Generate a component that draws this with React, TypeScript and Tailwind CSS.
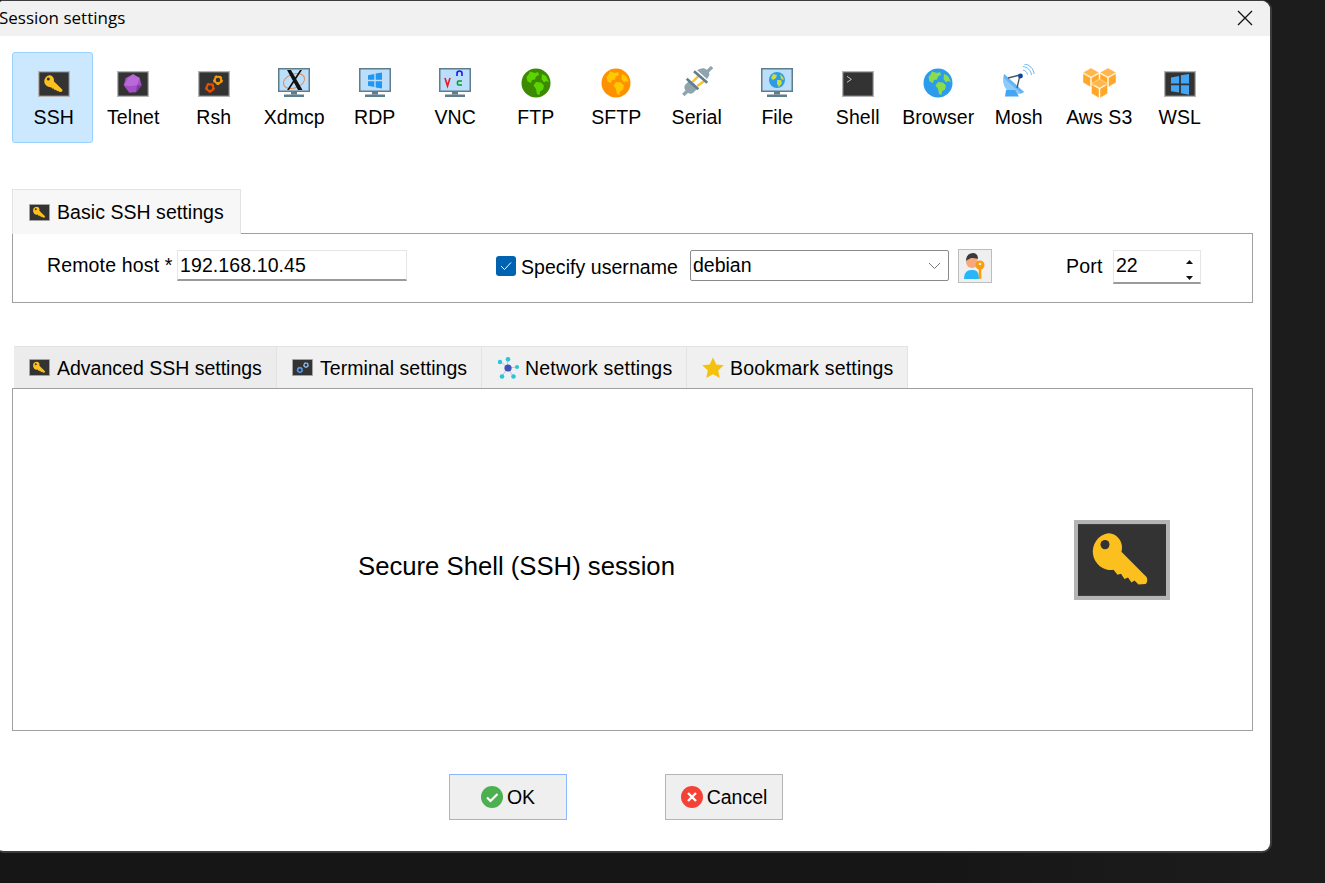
import type { ReactNode } from "react";

function Tile({ w = 32, h = 26, children }: { w?: number; h?: number; children?: ReactNode }) {
  return (
    <svg width={w} height={h} viewBox="0 0 96 78" preserveAspectRatio="none" className="shrink-0">
      <rect width="96" height="78" fill="#b4b4b4" />
      <rect x="4" y="4" width="88" height="70" fill="#333333" />
      {children}
    </svg>
  );
}

const keyShape = (
  <g fill="#fcc01e">
    <path d="M34 13a14 14 0 0 1 14 14c0 1.500-.2 2.800-.6 4L72 55c2 2 1.500 6-.5 7.500l-7 .5-4-4-3 2-3.500-5-3.500 1.500-3.500-5-3.500 1-4-5A14 14 0 1 1 34 13z" />
    <circle cx="31" cy="24" r="4.500" fill="#333333" />
  </g>
);

function KeyTile({ w = 32, h = 26 }: { w?: number; h?: number }) {
  return <Tile w={w} h={h}>{keyShape}</Tile>;
}

function Gear({ x, y, r, color }: { x: number; y: number; r: number; color: string }) {
  return (
    <g>
      <circle cx={x} cy={y} r={r} fill="none" stroke={color} strokeWidth={r * 0.62} />
      <circle cx={x} cy={y} r={r * 1.28} fill="none" stroke={color} strokeWidth={r * 0.42} strokeDasharray={`${r * 0.8} ${r * 0.8}`} />
    </g>
  );
}

function GemTile() {
  return (
    <Tile>
      <path d="M48 10l20 11 6 22-17 21-20 1-17-22 6-22z" fill="#a44fc6" />
      <path d="M48 10l20 11-8 22-22 3-16-3 11-22z" fill="#b96ad8" />
      <path d="M60 43l14 0-17 21z" fill="#7f3a9e" />
    </Tile>
  );
}

function Monitor({ children }: { children?: ReactNode }) {
  return (
    <svg width="32" height="29" viewBox="0 0 32 29" className="shrink-0">
      <rect x="0.750" y="0.750" width="30.500" height="22.500" fill="#bbdefb" stroke="#607d8b" strokeWidth="1.500" />
      <rect x="13" y="24" width="6" height="2.500" fill="#607d8b" />
      <rect x="6" y="26.500" width="20" height="2.500" fill="#607d8b" />
      {children}
    </svg>
  );
}

function Globe({ ocean, land, size = 30 }: { ocean: string; land: string; size?: number }) {
  return (
    <svg width={size} height={size} viewBox="0 0 30 30" className="-mb-[1px] shrink-0">
      <circle cx="15" cy="15" r="14.500" fill={ocean} />
      <path d="M9 3.500l5 1.500 3-1 1 3-3 1.500-1 3-3 .5-1 3-3.500-1.500-1-4.500 2-2.500zM15 14l5 .5 3 3-1 4-3 2-.5 3.500-2.500-1-1-5-2.500-3.500zM21 6l4 2 3 6-3-1-2 1.500-2.500-3.500z" fill={land} />
    </svg>
  );
}

function Plug() {
  return (
    <svg width="32" height="31" viewBox="0 0 32 31" className="shrink-0">
      <path d="M11.300 16l6-5.700M16.300 20l7-5" stroke="#fbc02d" strokeWidth="2.400" />
      <path d="M8 15l8 8-4 4c-2 1-4 1-6-1l-1-1c-2-2-2-4-1-6z" fill="#90a4ae" />
      <path d="M2.300 29l4-4" stroke="#90a4ae" strokeWidth="3.400" />
      <path d="M5.700 12.700L17.300 23.300" stroke="#607d8b" strokeWidth="2.600" />
      <path d="M16 4l10 9 2-3c1-2 0-4-1-5l-1-1c-2-2-5-2-7-1z" fill="#90a4ae" />
      <path d="M13 5.300l13.300 11.400" stroke="#607d8b" strokeWidth="2.600" />
      <path d="M25 7l6-6" stroke="#90a4ae" strokeWidth="3.200" />
    </svg>
  );
}

function Dish() {
  return (
    <svg width="32" height="33" viewBox="0 0 32 33" className="shrink-0">
      <path d="M1 10l20 18c-6 4-13 2-17-2S-1 16 1 10z" fill="#90caf9" />
      <path d="M1 10l20 18-3 1.500L1 14z" fill="#64b5f6" />
      <path d="M3 26h9l4 6.500H2z" fill="#42a5f5" />
      <path d="M5 14l12-3M17 11l-3 13" stroke="#455a64" strokeWidth="1.300" fill="none" />
      <circle cx="17.500" cy="12" r="2.400" fill="#0d47a1" />
      <path d="M20 6c2.500.5 4 2 4.500 4.500M20 2.500c4.500.5 8 4 8.500 8.500M21 0c5 0 10 5 10 10" stroke="#64b5f6" strokeWidth="1" fill="none" />
    </svg>
  );
}

function Cube({ x, y }: { x: number; y: number }) {
  return (
    <g transform={`translate(${x} ${y})`} stroke="#fff3e0" strokeWidth="0.500">
      <path d="M8 0l8 4.500-8 4.500-8-4.500z" fill="#ffb74d" />
      <path d="M0 5.500l7.500 4.200v9.300L0 14.500z" fill="#ffa726" />
      <path d="M16 5.500L8.500 9.700v9.300l7.500-4.500z" fill="#ffa726" />
    </g>
  );
}

function Cubes() {
  return (
    <svg width="33" height="30" viewBox="0 0 33 30" className="-mb-[1px] shrink-0">
      <Cube x={0} y={0} />
      <Cube x={17} y={0} />
      <Cube x={8.500} y={11} />
    </svg>
  );
}

function WindowsGlyph({ x, y, size, color }: { x: number; y: number; size: number; color: string }) {
  const g = size * 0.05;
  const h = size / 2;
  return (
    <path
      d={`M${x} ${y + size * 0.12}L${x + h - g} ${y + size * 0.04}V${y + h - g}H${x}ZM${x + h + g} ${y}L${x + size} ${y - size * 0.08}V${y + h - g}H${x + h + g}ZM${x} ${y + h + g}H${x + h - g}V${y + size * 0.96}L${x} ${y + size * 0.88}ZM${x + h + g} ${y + h + g}H${x + size}V${y + size * 1.08}L${x + h + g} ${y + size}Z`}
      fill={color}
    />
  );
}

const sessions: { label: string; icon: ReactNode }[] = [
  { label: "SSH", icon: <KeyTile /> },
  { label: "Telnet", icon: <GemTile /> },
  {
    label: "Rsh",
    icon: (
      <Tile>
        <Gear x={36} y={50} r={10} color="#e65100" />
        <Gear x={60} y={27} r={10} color="#f59a0c" />
      </Tile>
    ),
  },
  {
    label: "Xdmcp",
    icon: (
      <Monitor>
        <ellipse cx="16" cy="13" rx="11" ry="7" fill="none" stroke="#ef8a4a" strokeWidth="1" transform="rotate(-20 16 13)" />
        <path d="M9 2l11 20h4.500L13 2zM22 2L9 22h2L24 2z" fill="#111" />
      </Monitor>
    ),
  },
  {
    label: "RDP",
    icon: (
      <Monitor>
        <WindowsGlyph x={9} y={5.500} size={14} color="#2196f3" />
      </Monitor>
    ),
  },
  {
    label: "VNC",
    icon: (
      <Monitor>
        <path d="M6 10l2.500 8L11 10" stroke="#f01824" strokeWidth="1.600" fill="none" />
        <path d="M18 8V5.500a2.500 2.500 0 0 1 5 0V8" stroke="#1a1af0" strokeWidth="1.600" fill="none" />
        <path d="M23 13h-3.500a1 1 0 0 0-1 1v2a1 1 0 0 0 1 1H23" stroke="#0a9a20" strokeWidth="1.600" fill="none" />
      </Monitor>
    ),
  },
  { label: "FTP", icon: <Globe ocean="#3c8a00" land="#5cd400" /> },
  { label: "SFTP", icon: <Globe ocean="#ff9100" land="#ffc800" /> },
  { label: "Serial", icon: <Plug /> },
  {
    label: "File",
    icon: (
      <Monitor>
        <circle cx="16" cy="12" r="8" fill="#2e9be6" />
        <path d="M12 6l4 1-1 3-3 2-2-2zM16 12l4 0 1 3-3 4-2-3zM19 6l3 3 1 3-3-1z" fill="#cddc39" />
      </Monitor>
    ),
  },
  {
    label: "Shell",
    icon: (
      <Tile>
        <path d="M15 16l13 9-13 9" stroke="#e0e0e0" strokeWidth="2.500" fill="none" />
      </Tile>
    ),
  },
  { label: "Browser", icon: <Globe ocean="#2b9cec" land="#8bdc4a" /> },
  { label: "Mosh", icon: <Dish /> },
  { label: "Aws S3", icon: <Cubes /> },
  {
    label: "WSL",
    icon: (
      <Tile>
        <WindowsGlyph x={21} y={13} size={54} color="#42a5f5" />
      </Tile>
    ),
  },
];

function Tab({ icon, label, className, textClass = "" }: { icon: ReactNode; label: string; className: string; textClass?: string }) {
  return (
    <div className={`flex items-center border-t border-r border-[#e3e3e3] ${className}`}>
      {icon}
      <span className={`mt-[2px] ${textClass}`}>{label}</span>
    </div>
  );
}

function UserKey() {
  return (
    <svg width="22" height="28" viewBox="0 0 22 28">
      <path d="M0 27c0-6 3-9 7-9h2c4 0 6 3 6 9z" fill="#29b6f6" />
      <circle cx="8" cy="10" r="6" fill="#f5a97f" />
      <path d="M2 9c0-6 4-8 7-8s5 2 5 6c-2-1-5-1-7-1-1 1-3 1-5 3z" fill="#3a3a3a" />
      <circle cx="16" cy="13" r="4.500" fill="#fb9c0b" />
      <circle cx="16" cy="12" r="1.300" fill="#eee" />
      <path d="M14.700 16h2.600v10l-1.300 1.500-1.300-1.500z" fill="#fb9c0b" />
    </svg>
  );
}

export default function App() {
  return (
    <div className="flex h-[883px] w-[1325px] overflow-hidden bg-gradient-to-r from-[#161616] from-70% to-[#1c1c1c] to-95% font-['Liberation_Sans',sans-serif] text-black">
      <div className="-ml-[4px] h-[853px] w-[1276px] shrink-0 overflow-hidden rounded-tl-lg rounded-tr-[10px] rounded-br-[10px] rounded-bl-lg border-t border-r-2 border-b-2 border-[#3c3c3c] bg-white">
        {/* title bar */}
        <div className="flex h-[35px] items-center justify-between bg-[#f1f1f1] pr-[17px] pl-[3px]">
          <span className="-mt-[2px] font-['Open_Sans',sans-serif] text-[17px]">Session settings</span>
          <svg width="16" height="16" viewBox="0 0 16 16" className="-mt-[1px]">
            <path d="M1 1l14 14M15 1L1 15" stroke="#111" strokeWidth="1.300" />
          </svg>
        </div>

        {/* session types */}
        <div className="flex pt-4 pl-[16px]">
          {sessions.map((s, i) => (
            <div
              key={s.label}
              className={`flex h-[91px] w-[80.500px] shrink-0 flex-col items-center rounded-[3px] text-[19.500px] tracking-[0.080px] ${
                i === 0 ? "border border-[#99d1ff] bg-[#cce8ff] pl-[3px]" : "border border-transparent pl-[1px]"
              }`}
            >
              <div className="flex h-[44px] items-end">{s.icon}</div>
              <span className="mt-[7px] whitespace-nowrap leading-[26px]">{s.label}</span>
            </div>
          ))}
        </div>

        {/* basic settings */}
        <div className="relative mt-[46px] pl-[16px]">
          <div className="relative z-10 flex h-[45px] w-[229px] items-center gap-[7px] border-t border-r border-l border-[#e3e3e3] bg-[#f7f7f7] pl-[16px] text-[19.500px] tracking-[0.050px]">
            <KeyTile w={21} h={17} />
            <span className="mt-[1px]">Basic SSH settings</span>
          </div>
          <div className="-mt-[1px] mr-[17px] flex h-[70px] items-start border border-[#a0a0a0] pt-4 text-[19.500px]">
            <span className="mt-[1px] ml-[34px] w-[130px] shrink-0 whitespace-nowrap tracking-[0.150px]">Remote host *</span>
            <div className="h-[31px] w-[230px] shrink-0 border border-b-2 border-[#e6e6e6] border-b-[#9a9a9a] pl-[2px] leading-[28px] tracking-[0.100px]">192.168.10.45</div>
            <div className="mt-[6px] ml-[89px] flex h-5 w-5 shrink-0 items-center justify-center rounded-[3px] bg-[#0063b1]">
              <svg width="12" height="10" viewBox="0 0 12 10">
                <path d="M1 5l3.500 3.500L11 1.500" stroke="#fff" strokeWidth="1" fill="none" />
              </svg>
            </div>
            <span className="mt-[3px] ml-[5px] w-[169px] shrink-0 whitespace-nowrap tracking-[0.050px]">Specify username</span>
            <div className="flex h-[31px] w-[259px] shrink-0 items-center justify-between rounded-[2px] border border-[#8a8a8a] pr-[7px] pl-[2px]">
              <span>debian</span>
              <svg width="13" height="8" viewBox="0 0 13 8">
                <path d="M1 1l5.500 5.500L12 1" stroke="#777" strokeWidth="1" fill="none" />
              </svg>
            </div>
            <div className="-mt-[1px] ml-[9px] flex h-[34px] w-[34px] shrink-0 items-center justify-center border border-[#bdbdbd] bg-[#efefef]">
              <UserKey />
            </div>
            <span className="mt-[2px] ml-[74px] w-[47px] shrink-0 tracking-[0.200px]">Port</span>
            <div className="flex h-[34px] w-[88px] shrink-0 items-start justify-between border border-b-2 border-[#e6e6e6] border-b-[#9a9a9a] pt-[1px] pr-[6px] pl-[2px]">
              <span className="leading-[26px]">22</span>
              <svg width="9" height="26" viewBox="0 0 9 26" className="mt-[5px]">
                <path d="M4.500 3l3.500 4H1zM1 19h7l-3.500 4z" fill="#111" />
              </svg>
            </div>
          </div>
        </div>

        {/* tabs */}
        <div className="mt-[43px] ml-[18px] flex h-[42px] text-[19.500px]">
          <Tab className="w-[263px] gap-[7px] bg-[#ececec] pl-[15px]" icon={<KeyTile w={21} h={17} />} label="Advanced SSH settings" />
          <Tab
            className="w-[205px] gap-[7px] bg-[#f0f0f0] pl-[15px]"
            label="Terminal settings"
            textClass="tracking-[0.050px]"
            icon={
              <Tile w={21} h={17}>
                <Gear x={36} y={50} r={10} color="#5a9be8" />
                <Gear x={64} y={28} r={9} color="#8fb8e8" />
              </Tile>
            }
          />
          <Tab
            className="w-[205px] gap-[6px] bg-[#f0f0f0] pl-[15px]"
            label="Network settings"
            textClass="tracking-[0.200px]"
            icon={
              <svg width="22" height="22" viewBox="0 0 22 22" className="shrink-0">
                <path d="M11 11L3 4M11 11L10 2M11 11l9-1M11 11L4 20M11 11l5 8" stroke="#b8c4e8" strokeWidth="1" />
                <circle cx="11" cy="11" r="3.600" fill="#3f51b5" />
                <circle cx="3" cy="5" r="2.200" fill="#26c6da" />
                <circle cx="11" cy="2.300" r="2.300" fill="#26c6da" />
                <circle cx="20" cy="10" r="2" fill="#26c6da" />
                <circle cx="5" cy="19.500" r="2.300" fill="#26c6da" />
                <circle cx="16.500" cy="19.500" r="2.300" fill="#26c6da" />
              </svg>
            }
          />
          <Tab
            className="w-[221px] gap-[6px] bg-[#f0f0f0] pl-[15px]"
            label="Bookmark settings"
            textClass="tracking-[0.180px]"
            icon={
              <svg width="22" height="22" viewBox="0 0 22 22" className="shrink-0">
                <path d="M11 .500l3.300 7 7.500.8-5.600 5.100 1.600 7.600L11 17.200 4.200 21l1.600-7.600L.2 8.300l7.500-.8z" fill="#f4c20d" />
              </svg>
            }
          />
        </div>

        {/* description panel */}
        <div className="mr-[17px] ml-[16px] flex h-[343px] items-center border border-[#a0a0a0] pl-[345px] text-[25.700px]">
          <span className="mt-[14px] w-[716px] shrink-0 whitespace-nowrap">Secure Shell (SSH) session</span>
          <KeyTile w={96} h={80} />
        </div>

        {/* buttons */}
        <div className="mt-[43px] ml-[453px] flex gap-[98px] text-[19.500px]">
          <button className="flex h-[46px] w-[118px] items-center justify-center gap-[4px] border border-[#8ab8ff] bg-[#efefef]">
            <svg width="22" height="22" viewBox="0 0 22 22">
              <circle cx="11" cy="11" r="11" fill="#4caf50" />
              <path d="M6 11.500l3.500 3.500 7-7" stroke="#fff" strokeWidth="2.200" fill="none" />
            </svg>
            <span className="mt-[2px]">OK</span>
          </button>
          <button className="flex h-[46px] w-[118px] items-center justify-center gap-[4px] border border-[#b4b4b4] bg-[#efefef]">
            <svg width="22" height="22" viewBox="0 0 22 22">
              <circle cx="11" cy="11" r="11" fill="#f44336" />
              <path d="M7 7l8 8M15 7l-8 8" stroke="#fff" strokeWidth="2.400" />
            </svg>
            <span className="mt-[2px]">Cancel</span>
          </button>
        </div>
      </div>
    </div>
  );
}
